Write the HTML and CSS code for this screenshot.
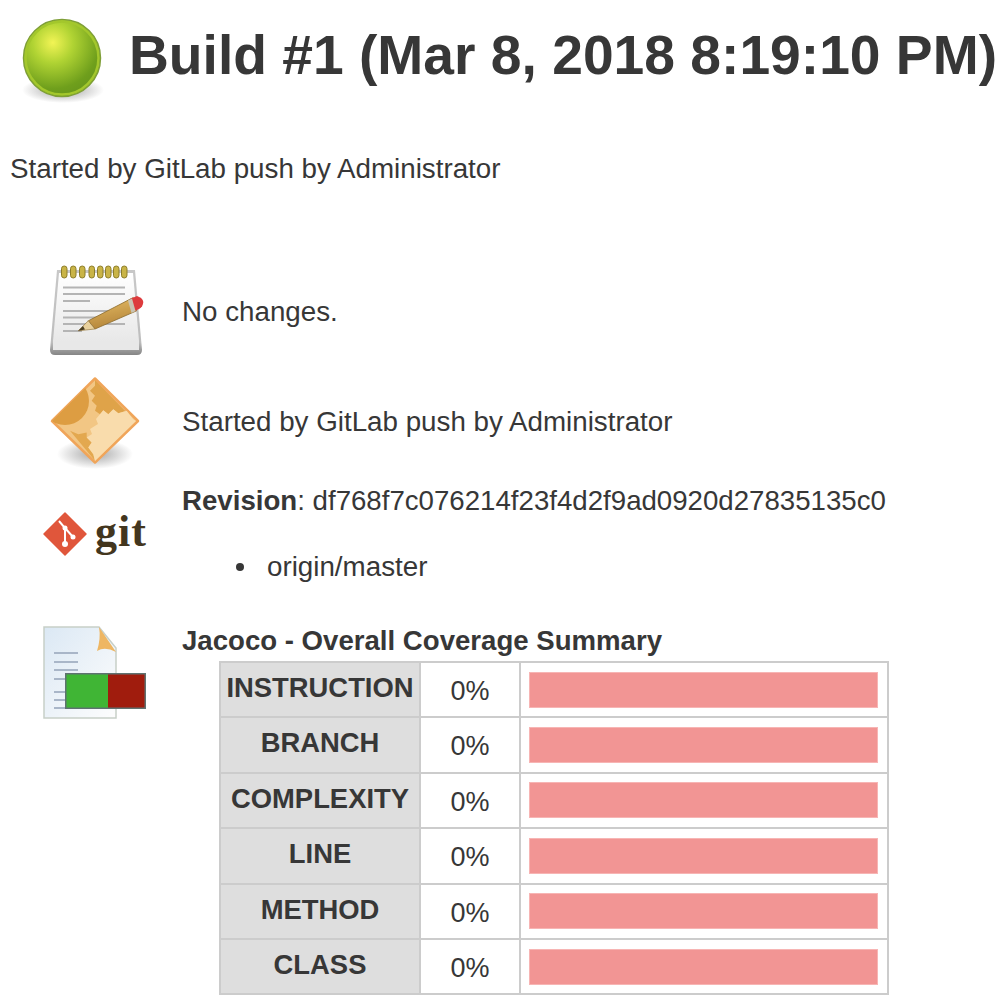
FILE: index.html
```html
<!DOCTYPE html>
<html lang="en">
<head>
  <meta charset="UTF-8" />
  <title>Build #1</title>
  <link rel="stylesheet" href="styles.css">
</head>
<body>
  <header class="build-head">
    <svg class="ball" viewBox="0 0 90 96" width="90" height="96">
      <defs>
        <radialGradient id="ballFill" cx="0.38" cy="0.3" r="0.75">
          <stop offset="0" stop-color="#f2f455"/>
          <stop offset="0.35" stop-color="#b0d333"/>
          <stop offset="0.8" stop-color="#6f9f1c"/>
          <stop offset="1" stop-color="#66951c"/>
        </radialGradient>
        <radialGradient id="ballShadow">
          <stop offset="0" stop-color="#888" stop-opacity="0.8"/>
          <stop offset="1" stop-color="#888" stop-opacity="0"/>
        </radialGradient>
      </defs>
      <ellipse cx="41" cy="72" rx="41" ry="13" fill="url(#ballShadow)"/>
      <circle cx="40" cy="40" r="38.5" fill="url(#ballFill)" stroke="#7f9f38" stroke-width="1.5"/>
      <circle cx="40" cy="40" r="36.5" fill="none" stroke="#a3c72c" stroke-width="2.5"/>
    </svg>
    <h1>Build #1 (Mar 8, 2018 8:19:10 PM)</h1>
  </header>

  <p class="cause">Started by GitLab push by Administrator</p>

  <div class="summary">
    <div class="row row-changes">
      <div class="icon">
        <svg viewBox="0 0 100 95" width="100" height="95">
          <defs>
            <linearGradient id="padFill" x1="0" y1="0" x2="0" y2="1">
              <stop offset="0" stop-color="#fff"/>
              <stop offset="1" stop-color="#e8e8e8"/>
            </linearGradient>
            <linearGradient id="padEdge" x1="0" y1="0" x2="0" y2="1">
              <stop offset="0" stop-color="#c8c8c8"/>
              <stop offset="0.85" stop-color="#bdbdbd"/>
              <stop offset="1" stop-color="#858585"/>
            </linearGradient>
            <linearGradient id="woodFill" x1="0" y1="0" x2="0.3" y2="1">
              <stop offset="0" stop-color="#e8bf68"/>
              <stop offset="1" stop-color="#b5863a"/>
            </linearGradient>
          </defs>
          <g filter="url(#soft)">
            <path d="M9 5H87L94 85Q94 90 89 90H7Q2 90 2 85Z" fill="url(#padEdge)"/>
            <path d="M11 8H85L91 76H5Z" fill="url(#padFill)"/>
            <rect x="5" y="76" width="86" height="9" fill="#e8e8e8"/>
            <g fill="#c9b446" stroke="#8c7d2a" stroke-width="1">
              <rect x="13.5" y="1" width="5.5" height="12" rx="2.7"/>
              <rect x="22.5" y="1" width="5.5" height="12" rx="2.7"/>
              <rect x="31.5" y="1" width="5.5" height="12" rx="2.7"/>
              <rect x="41" y="1" width="5.5" height="12" rx="2.7"/>
              <rect x="49.5" y="1" width="5.5" height="12" rx="2.7"/>
              <rect x="57.5" y="1" width="5.5" height="12" rx="2.7"/>
              <rect x="65.5" y="1" width="5.5" height="12" rx="2.7"/>
              <rect x="73.5" y="1" width="5.5" height="12" rx="2.7"/>
            </g>
            <g stroke="#b4b4b4" stroke-width="1.8">
              <path d="M15 22.5H77M15 29H77M15 36H42M15 46H62M15 52.5H50M15 59H77M15 66H34"/>
            </g>
            <path d="M40.3 55.8L85.3 32.5L88.7 45.8L47 64Z" fill="url(#woodFill)" stroke="#8a6a2c" stroke-width="0.8"/>
            <path d="M30.3 65.8L40.3 55.8L47 64Z" fill="#e9d19d" stroke="#8a6a2c" stroke-width="0.6"/>
            <path d="M30.3 65.8L35 61L37 64.5Z" fill="#4a3c20"/>
            <path d="M82 34L89 31Q95 33 95.3 37Q95 42 91 44L85.5 46.5Z" fill="#dd3a3e"/>
            <path d="M80 35.5L84 33.5L87.5 46L83.5 48Z" fill="#c9c4b4"/>
          </g>
        </svg>
      </div>
      <div class="text">No changes.</div>
    </div>

    <div class="row row-started">
      <div class="icon">
        <svg viewBox="0 0 100 95" width="100" height="95">
          <defs>
            <radialGradient id="diaShadow">
              <stop offset="0" stop-color="#888" stop-opacity="0.75"/>
              <stop offset="1" stop-color="#888" stop-opacity="0"/>
            </radialGradient>
            <clipPath id="diaClip"><path d="M47 3.5L90 46L47 87.5L4 46Z"/></clipPath>
          </defs>
          <ellipse cx="47" cy="79" rx="38" ry="15" fill="url(#diaShadow)"/>
          <g filter="url(#soft)">
            <path d="M47 3.5L90 46L47 87.5L4 46Z" fill="#f2c684" stroke="#f0a55a" stroke-width="2.5" stroke-linejoin="round"/>
            <g clip-path="url(#diaClip)">
              <circle cx="17" cy="26" r="24" fill="#dd9d42"/>
              <path d="M47 10.8L42 15.8L47 20.8L43.7 25.8L48.7 30.8L47 35.8L52 39.2L55.3 35.2L60.3 39.2L65.3 34.2L70.3 38.2L78.7 35.8L85.3 44.2L47 5Z" fill="#dfa349"/>
              <path d="M22 55.8L30.3 59.2L38.7 57.5L38.7 62.5L43.7 67.5L40.3 72.5L45.3 79.2L47 85.8Z" fill="#e3a850"/>
              <path d="M52 39.2L48 44L50 49L42 54L44 59L38.7 62.5L43.7 67.5L40.3 72.5L45.3 79.2L47 86L88 46L85.3 44.2L78.7 35.8L70.3 38.2L65.3 34.2L60.3 39.2L55.3 35.2Z" fill="#f9dcac"/>
            </g>
          </g>
        </svg>
      </div>
      <div class="text">Started by GitLab push by Administrator</div>
    </div>

    <div class="row row-git">
      <div class="icon git-logo">
        <svg viewBox="0 0 44 46" width="44" height="46">
          <g filter="url(#soft)">
            <path d="M22 2L43 23L22 44L1 23Z" fill="#e0563a" stroke="#e0563a" stroke-width="1.5" stroke-linejoin="round"/>
            <path d="M16 10L22 17V32M22 17L30 26" fill="none" stroke="#fff" stroke-width="2"/>
            <circle cx="22" cy="33" r="3" fill="#fff"/>
            <circle cx="22" cy="17" r="2.5" fill="#fff"/>
            <circle cx="30" cy="26" r="2.5" fill="#fff"/>
          </g>
        </svg>
        <span class="git-word">git</span>
      </div>
      <div class="text">
        <div class="revision"><b>Revision</b>: df768f7c076214f23f4d2f9ad0920d27835135c0</div>
        <ul class="branches">
          <li>origin/master</li>
        </ul>
      </div>
    </div>

    <div class="row row-jacoco">
      <div class="icon">
        <svg viewBox="0 0 110 100" width="110" height="100">
          <defs>
            <linearGradient id="docFill" x1="0" y1="0" x2="1" y2="1">
              <stop offset="0" stop-color="#dbe8f4"/>
              <stop offset="1" stop-color="#fdfdfd"/>
            </linearGradient>
          </defs>
          <g filter="url(#soft)">
            <path d="M1 1H56L73 22V92H1Z" fill="url(#docFill)" stroke="#c7cfc8" stroke-width="1.5"/>
            <path d="M56 1L73 26Q62 20 54 25Q58 12 56 1Z" fill="#eeb663"/>
            <g stroke="#a9b6c8" stroke-width="2">
              <path d="M11 27H35M11 36H35M11 44H35M11 53H33M11 66H22M11 74H22M11 82H22"/>
            </g>
            <rect x="22" y="47" width="81" height="36" fill="#5f7270"/>
            <rect x="23.5" y="48.5" width="41.5" height="33" fill="#3fb535"/>
            <rect x="65" y="48.5" width="36.5" height="33" fill="#a01c10"/>
          </g>
        </svg>
      </div>
      <div class="text">
        <div class="coverage-title">Jacoco - Overall Coverage Summary</div>
        <table class="coverage">
          <tr><th>INSTRUCTION</th><td class="pct">0%</td><td class="bar-cell"><div class="bar"></div></td></tr>
          <tr><th>BRANCH</th><td class="pct">0%</td><td class="bar-cell"><div class="bar"></div></td></tr>
          <tr><th>COMPLEXITY</th><td class="pct">0%</td><td class="bar-cell"><div class="bar"></div></td></tr>
          <tr><th>LINE</th><td class="pct">0%</td><td class="bar-cell"><div class="bar"></div></td></tr>
          <tr><th>METHOD</th><td class="pct">0%</td><td class="bar-cell"><div class="bar"></div></td></tr>
          <tr><th>CLASS</th><td class="pct">0%</td><td class="bar-cell"><div class="bar"></div></td></tr>
        </table>
      </div>
    </div>
  </div>

  <svg class="defs-only" width="0" height="0">
    <filter id="soft"><feGaussianBlur stdDeviation="0.6"/></filter>
  </svg>
</body>
</html>
```

FILE: styles.css
```css
html, body {
  margin: 0;
  padding: 0;
  background: #fff;
  overflow: hidden;
}
body {
  font-family: "Liberation Sans", Arial, sans-serif;
  font-size: 27.75px;
  color: #373737;
  height: 1006px;
}
.build-head {
  display: flex;
  align-items: flex-start;
  padding: 18px 0 0 22px;
  height: 104px;
  box-sizing: border-box;
}
.build-head .ball {
  flex: none;
  margin-right: 17px;
}
.build-head h1 {
  margin: 0;
  font-size: 55.2px;
  line-height: 75px;
  white-space: nowrap;
}
.cause {
  margin: 48px 0 0 10px;
  line-height: 34px;
}
.summary {
  margin-top: 79px;
  padding-left: 43px;
}
.row {
  display: flex;
  align-items: center;
}
.row .icon {
  flex: none;
  width: 139px;
  display: flex;
}
.row-changes {
  height: 95px;
}
.row-changes .icon svg {
  margin-left: 5px;
}
.row-changes .text,
.row-started .text {
  padding-bottom: 2px;
}
.row-started {
  height: 95px;
  margin-top: 15px;
}
.row-started .icon svg {
  margin-left: 5px;
}
.row-git {
  align-items: flex-start;
  margin-top: 14px;
}
.row-git .icon {
  padding-top: 27px;
}
.row-git .revision {
  font-size: 27.65px;
  line-height: 34px;
}
.git-logo {
  height: 46px;
  align-items: flex-start;
}
.git-word {
  font-family: "Liberation Serif", serif;
  font-weight: bold;
  font-size: 44px;
  line-height: 42px;
  letter-spacing: 1px;
  color: #43361e;
  margin-left: 8px;
}
.branches {
  list-style: none;
  margin: 32px 0 0;
  padding-left: 54px;
  line-height: 34px;
}
.branches li {
  display: flex;
  align-items: center;
}
.branches li::before {
  content: "";
  width: 8px;
  height: 8px;
  border-radius: 50%;
  background: #373737;
  margin-right: 23px;
}
.row-jacoco {
  align-items: flex-start;
  margin-top: 39px;
}
.row-jacoco .icon {
  padding-top: 3px;
}
.coverage-title {
  font-size: 27.6px;
  font-weight: bold;
  line-height: 36px;
  margin-bottom: 2px;
}
.coverage {
  border-collapse: collapse;
  margin-left: 37px;
  border: 2px solid #ccc;
  table-layout: fixed;
  width: 670px;
}
.coverage th, .coverage td {
  border: 2px solid #ccc;
  padding: 0;
  height: 55.4px;
  box-sizing: border-box;
  text-align: center;
}
.coverage th {
  background: #dedede;
  width: 200px;
  vertical-align: top;
  font-size: 27.4px;
  line-height: 50px;
}
.coverage .pct {
  width: 100px;
  vertical-align: top;
  padding-top: 4px;
  font-size: 27px;
  line-height: 48px;
}
.coverage .bar-cell {
  padding: 0 9px 0 8px;
}
.bar {
  height: 36px;
  background: #f29594;
  border: 1px solid #f7b5b4;
  box-sizing: border-box;
}
.defs-only {
  position: absolute;
}
```
